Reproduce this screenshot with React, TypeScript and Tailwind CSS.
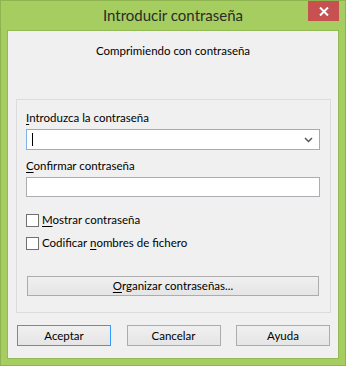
import React from "react";

const font = { fontFamily: 'Lato, "Noto Sans", sans-serif' };

function Btn({ children, focused }: { children: React.ReactNode; focused?: boolean }) {
  return (
    <div
      className={`flex h-[21px] w-[94px] items-center justify-center border bg-gradient-to-b from-[#f0f0f0] to-[#e5e5e5] text-[11.5px] text-black ${
        focused ? "border-[#3399ff]" : "border-[#acacac]"
      }`}
    >
      {children}
    </div>
  );
}

function Check({ children }: { children: React.ReactNode }) {
  return (
    <div className="flex items-center gap-[3px] text-[11.5px] leading-[16px] text-black">
      <div className="h-[13px] w-[13px] border border-[#707070] bg-white" />
      <span>{children}</span>
    </div>
  );
}

export default function App() {
  return (
    <div style={font} className="h-[366px] w-[346px] border border-[#8eb44f] bg-[#a5cd5f]">
      {/* Title bar */}
      <div className="relative flex h-[29px] items-center justify-center px-[6px]">
        <span className="text-[15px] text-[#2b2b2b]">Introducir contraseña</span>
        <div className="absolute right-[6px] top-0 flex h-[20px] w-[31px] items-center justify-center bg-[#c75050]">
          <svg width="10" height="9" viewBox="0 0 10 9">
            <path d="M1 0.5 L9 8.5 M9 0.5 L1 8.5" stroke="white" strokeWidth="2" />
          </svg>
        </div>
      </div>

      {/* Client area */}
      <div className="mx-[6px] h-[329px] border border-[#93b955] bg-[#f0f0f0]">
        <div className="mt-[12px] text-center text-[11.5px] leading-[16px] text-black">
          Comprimiendo con contraseña
        </div>

        <div className="ml-[8px] mt-[40px] h-[214px] w-[315px] border border-[#dcdcdc]">
          <div className="ml-[9px] mt-[10px] text-[11.5px] leading-[16px] text-black">
            <span className="underline underline-offset-2">I</span>ntroduzca la contraseña
          </div>
          <div className="ml-[9px] mt-[3px] flex h-[21px] w-[294px] items-center justify-between border border-[#7eb4ea] bg-white pl-[5px] pr-[6px]">
            <div className="h-[13px] w-[1px] bg-black" />
            <svg width="9" height="6" viewBox="0 0 9 6">
              <path d="M1 1 L4.5 4.5 L8 1" stroke="#555" strokeWidth="1.5" fill="none" />
            </svg>
          </div>
          <div className="ml-[9px] mt-[8px] text-[11.5px] leading-[16px] text-black">
            <span className="underline underline-offset-2">C</span>onfirmar contraseña
          </div>
          <div className="ml-[9px] mt-[3px] h-[20px] w-[294px] border border-[#abadb3] bg-white" />
          <div className="ml-[9px] mt-[15px] flex flex-col gap-[7px]">
            <Check>
              <span className="underline underline-offset-2">M</span>ostrar contraseña
            </Check>
            <Check>
              Codificar <span className="underline underline-offset-2">n</span>ombres de fichero
            </Check>
          </div>
          <div className="ml-[10px] mt-[25px] flex h-[20px] w-[292px] items-center justify-center border border-[#acacac] bg-gradient-to-b from-[#f0f0f0] to-[#e5e5e5] text-[11.5px] text-black">
            <span>
              <span className="underline underline-offset-2">O</span>rganizar contraseñas...
            </span>
          </div>
        </div>

        <div className="ml-[9px] mt-[12px] flex w-[313px] justify-between">
          <Btn focused>Aceptar</Btn>
          <Btn>Cancelar</Btn>
          <Btn>Ayuda</Btn>
        </div>
      </div>
    </div>
  );
}
